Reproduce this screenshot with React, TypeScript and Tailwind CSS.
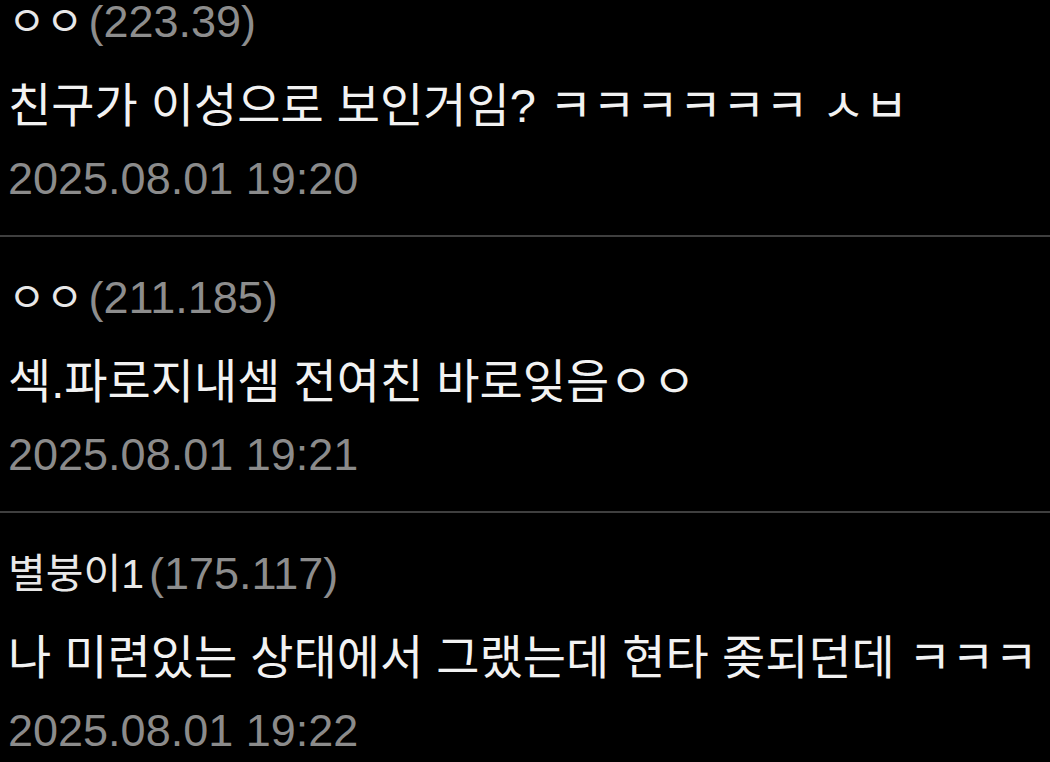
import React from "react";

type Comment = {
  nick: string;
  ip: string;
  body: string;
  date: string;
};

const COMMENTS: Comment[] = [
  {
    nick: "ㅇㅇ",
    ip: "(223.39)",
    body: "친구가 이성으로 보인거임? ㅋㅋㅋㅋㅋㅋ ㅅㅂ",
    date: "2025.08.01 19:20",
  },
  {
    nick: "ㅇㅇ",
    ip: "(211.185)",
    body: "섹.파로지내셈 전여친 바로잊음ㅇㅇ",
    date: "2025.08.01 19:21",
  },
  {
    nick: "별붕이1",
    ip: "(175.117)",
    body: "나 미련있는 상태에서 그랬는데 현타 좆되던데 ㅋㅋㅋ",
    date: "2025.08.01 19:22",
  },
];

const FONT = {
  fontFamily: '"Liberation Sans", "Noto Sans CJK KR", sans-serif',
};

export default function App() {
  return (
    <div
      className="min-h-screen w-full overflow-hidden bg-black"
      style={FONT}
    >
      {/* list is scrolled, first comment is cut off at the top */}
      <div className="-mt-[39px]">
        {COMMENTS.map((c, i) => (
          <div
            key={i}
            className="flex flex-col border-b-2 border-[#3f3f3f] pt-[31px] pb-[26px] pl-2"
          >
            <div className="flex items-center whitespace-nowrap text-[45px] leading-[60px]">
              <span className="text-[41px] text-[#e8e8e8]">{c.nick}</span>
              <span className="ml-[5px] text-[#8d8d8d]">{c.ip}</span>
            </div>
            <div className="mt-[24px] whitespace-nowrap text-[47px] leading-[60px] text-[#f2f2f2]">
              {c.body}
            </div>
            <div className="mt-[13px] whitespace-nowrap text-[45px] leading-[60px] text-[#8b8b8b]">
              {c.date}
            </div>
          </div>
        ))}
      </div>
    </div>
  );
}
